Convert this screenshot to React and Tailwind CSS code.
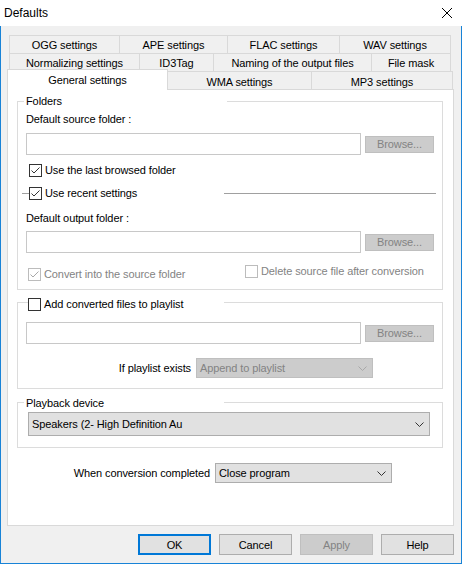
import React from "react";

function Check({ checked, disabled }) {
  return (
    <span
      className={
        disabled
          ? "w-[13px] h-[13px] border border-[#bcbcbc] bg-white flex items-center justify-center flex-none"
          : "w-[13px] h-[13px] border border-[#333333] bg-white flex items-center justify-center flex-none"
      }
    >
      {checked && (
        <svg width="11" height="11" viewBox="0 0 11 11">
          <path
            d="M1.5 5.5 L4 8 L9.5 2.5"
            fill="none"
            stroke={disabled ? "#a8a8a8" : "#333333"}
            strokeWidth="1"
          />
        </svg>
      )}
    </span>
  );
}

function Chevron({ color }) {
  return (
    <svg width="9" height="5" viewBox="0 0 9 5" className="flex-none">
      <path d="M0.5 0.5 L4.5 4.5 L8.5 0.5" fill="none" stroke={color} strokeWidth="1" />
    </svg>
  );
}

function Browse() {
  return (
    <div className="w-[69px] h-[17px] bg-[#cccccc] border border-[#bfbfbf] text-[#838383] flex items-center justify-center">
      Browse...
    </div>
  );
}

function InputRow() {
  return (
    <div className="flex items-center ml-[8px] gap-[4px]">
      <div className="w-[335px] h-[22px] border border-[#c8c8c8] bg-white" />
      <Browse />
    </div>
  );
}

function Tab({ children, className }) {
  return (
    <div className={"flex items-center justify-center border-t border-r border-[#d9d9d9] bg-[#f0f0f0] " + className}>
      {children}
    </div>
  );
}

export default function App() {
  return (
    <div className="w-[462px] h-[564px] flex flex-col bg-[#f0f0f0] font-['Liberation_Sans',Arial,sans-serif] text-[11px] leading-[14px] tracking-[-0.1px] text-black">
      {/* title bar */}
      <div className="h-[26px] bg-white flex items-center justify-between pl-[4px] pr-[10px] flex-none">
        <span className="text-[12px] tracking-normal">Defaults</span>
        <svg width="10" height="10" viewBox="0 0 10 10">
          <path d="M0 0 L10 10 M10 0 L0 10" stroke="#000" strokeWidth="1" />
        </svg>
      </div>

      {/* body */}
      <div className="flex-1 border-x border-b border-[#1883d7] flex flex-col pt-[9px] pl-[6px] pr-[7px]">
        {/* tab rows */}
        <div className="flex ml-[2px] h-[18px]">
          <Tab className="w-[111px] border-l">OGG settings</Tab>
          <Tab className="w-[108px]">APE settings</Tab>
          <Tab className="w-[112px]">FLAC settings</Tab>
          <Tab className="w-[111px]">WAV settings</Tab>
        </div>
        <div className="flex ml-[2px] h-[18px]">
          <Tab className="w-[131px] border-l">Normalizing settings</Tab>
          <Tab className="w-[74px]">ID3Tag</Tab>
          <Tab className="w-[158px]">Naming of the output files</Tab>
          <Tab className="w-[79px]">File mask</Tab>
        </div>
        <div className="flex items-end h-[18px]">
          <div className="relative z-10 w-[161px] h-[21px] -mb-px bg-white border-l border-t border-r border-[#d9d9d9] flex items-center justify-center">
            General settings
          </div>
          <Tab className="w-[144px] h-[18px] pt-[2px]">WMA settings</Tab>
          <Tab className="w-[141px] h-[18px] pt-[2px]">MP3 settings</Tab>
        </div>

        {/* panel */}
        <div className="h-[437px] bg-white border border-[#d9d9d9] flex flex-col flex-none">
          {/* Folders group */}
          <div className="mt-[11px] ml-[9px] mr-[10px] h-[189px] border border-[#dcdcdc] flex flex-col">
            <div className="-mt-[8px] ml-[6px] w-[203px] h-[14px] bg-white pl-[2px]">Folders</div>
            <div className="mt-[4px] ml-[8px]">Default source folder :</div>
            <div className="mt-[7px]">
              <InputRow />
            </div>
            <div className="mt-[8px] ml-[11px] h-[14px] flex items-center gap-[3px]">
              <Check checked />
              <span>Use the last browsed folder</span>
            </div>
            <div className="mt-[9px] ml-[4px] mr-[6px] h-[14px] flex items-center">
              <div className="w-[202px] flex items-center">
                <span className="w-[7px] h-px bg-[#a0a0a0] flex-none" />
                <Check checked />
                <span className="ml-[3px]">Use recent settings</span>
              </div>
              <div className="flex-1 h-px bg-[#a0a0a0]" />
            </div>
            <div className="mt-[11px] ml-[8px]">Default output folder :</div>
            <div className="mt-[6px]">
              <InputRow />
            </div>
            <div className="mt-[11px] ml-[10px] flex items-start">
              <div className="w-[217px] mt-[3px] h-[14px] flex items-center gap-[3px] text-[#838383]">
                <Check checked disabled />
                <span>Convert into the source folder</span>
              </div>
              <div className="h-[14px] flex items-center gap-[3px] text-[#838383]">
                <Check disabled />
                <span>Delete source file after conversion</span>
              </div>
            </div>
          </div>

          {/* Playlist group */}
          <div className="mt-[12px] ml-[9px] mr-[10px] h-[87px] border border-[#dcdcdc] flex flex-col">
            <div className="-mt-[6px] ml-[10px] w-[196px] h-[14px] bg-white flex items-center gap-[3px]">
              <Check />
              <span>Add converted files to playlist</span>
            </div>
            <div className="mt-[11px]">
              <InputRow />
            </div>
            <div className="mt-[14px] flex items-center">
              <div className="w-[173px] text-right">If playlist exists</div>
              <div className="ml-[5px] w-[177px] h-[20px] bg-[#cccccc] border border-[#bfbfbf] text-[#838383] flex items-center justify-between pl-[3px] pr-[5px]">
                <span>Append to playlist</span>
                <Chevron color="#a8a8a8" />
              </div>
            </div>
          </div>

          {/* Playback device group */}
          <div className="mt-[13px] ml-[9px] mr-[10px] h-[46px] border border-[#dcdcdc] flex flex-col">
            <div className="-mt-[7px] ml-[6px] w-[200px] h-[14px] bg-white pl-[2px]">Playback device</div>
            <div className="mt-[2px] ml-[10px] w-[402px] h-[24px] bg-[#e1e1e1] border border-[#adadad] flex items-center justify-between pl-[3px] pr-[5px]">
              <span>Speakers (2- High Definition Au</span>
              <Chevron color="#333333" />
            </div>
          </div>

          {/* When conversion completed */}
          <div className="mt-[15px] flex items-center">
            <div className="w-[202px] text-right">When conversion completed</div>
            <div className="ml-[5px] w-[177px] h-[20px] bg-[#e1e1e1] border border-[#adadad] flex items-center justify-between pl-[3px] pr-[5px]">
              <span>Close program</span>
              <Chevron color="#333333" />
            </div>
          </div>
        </div>

        {/* buttons */}
        <div className="mt-[8px] flex justify-end gap-[8px]">
          <div className="w-[73px] h-[21px] bg-[#e1e1e1] border-2 border-[#0078d7] flex items-center justify-center">OK</div>
          <div className="w-[73px] h-[21px] bg-[#e1e1e1] border border-[#adadad] flex items-center justify-center">Cancel</div>
          <div className="w-[73px] h-[21px] bg-[#cccccc] border border-[#bfbfbf] text-[#838383] flex items-center justify-center">Apply</div>
          <div className="w-[73px] h-[21px] bg-[#e1e1e1] border border-[#adadad] flex items-center justify-center">Help</div>
        </div>
      </div>
    </div>
  );
}
